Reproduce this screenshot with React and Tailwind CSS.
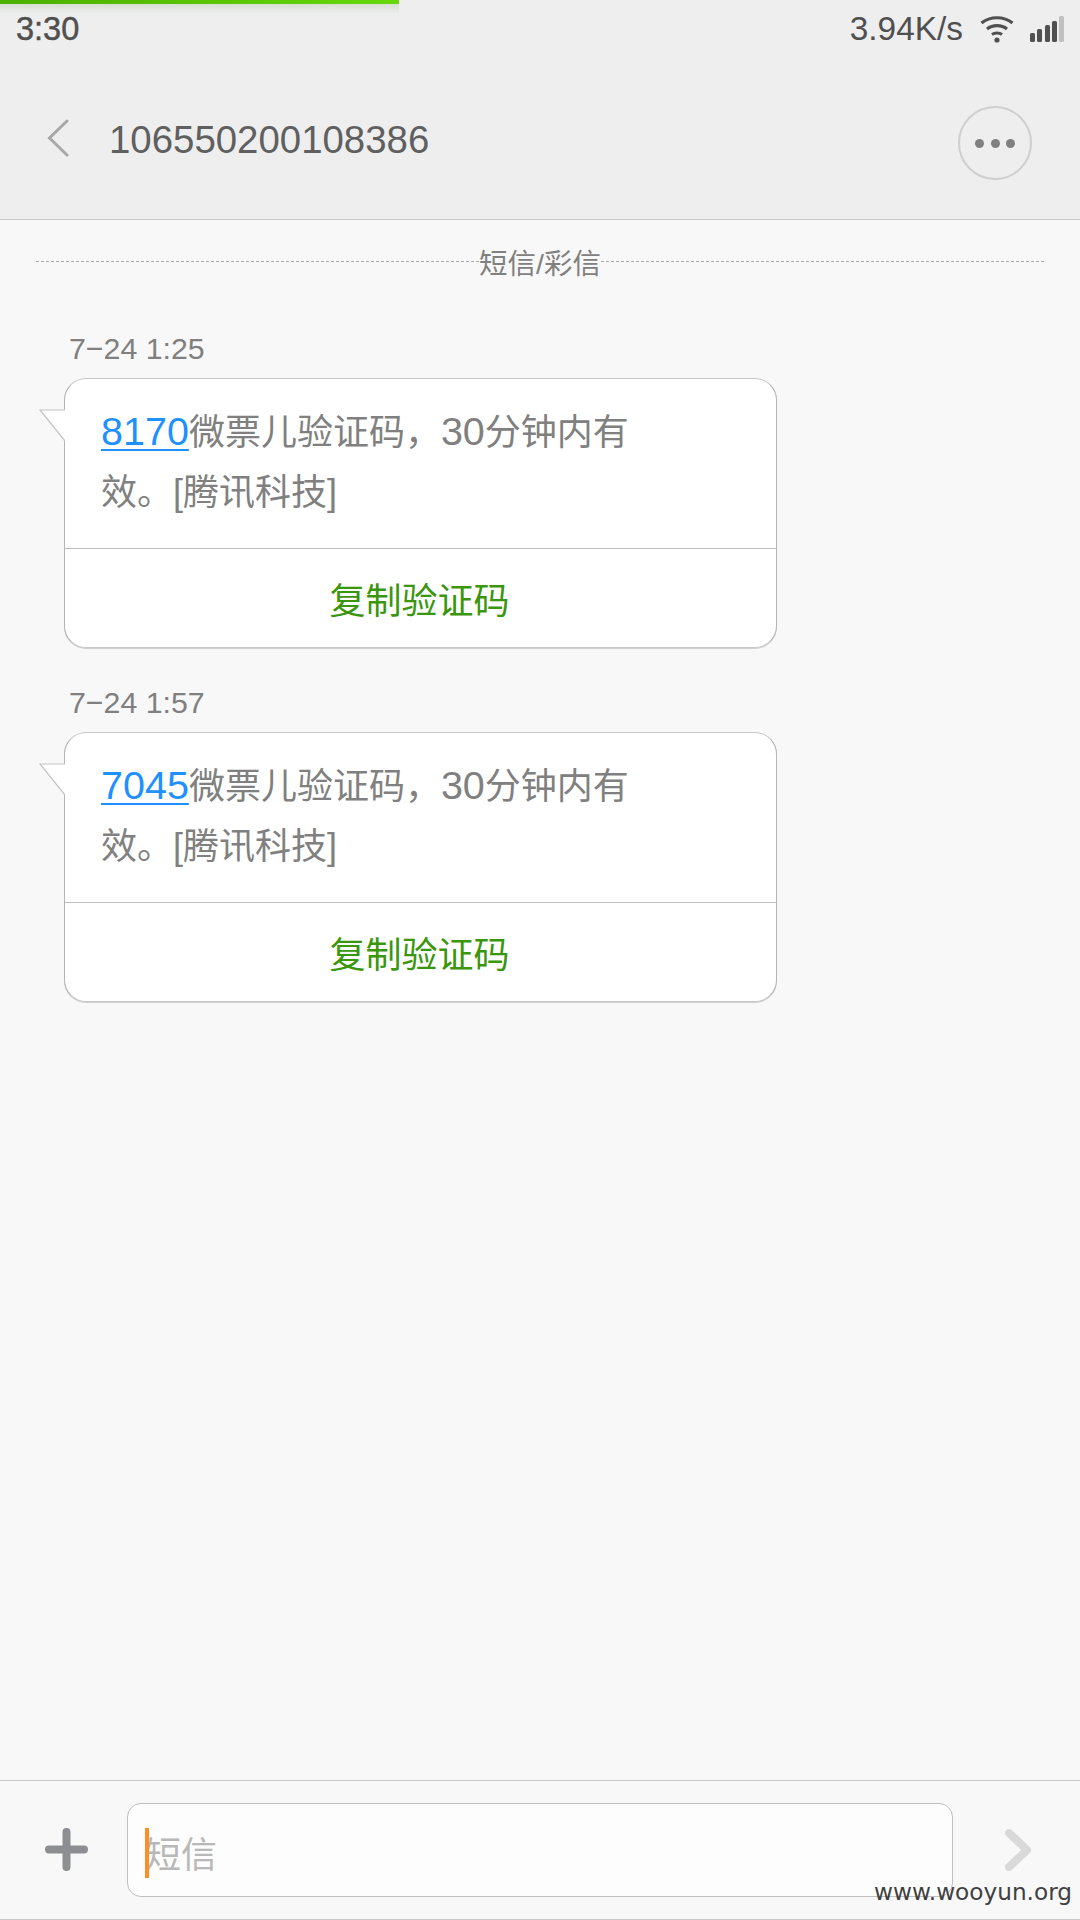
const latin = "font-['Liberation_Sans','Noto_Sans_CJK_SC',sans-serif]";

function Bubble({ time, code }) {
  return (
    <div className="flex flex-col">
      <div className="h-[48px] pl-[69px] pt-[2px] text-[30.3px] leading-[34px] text-[#808080]">{time}</div>
      <div className="relative ml-[64px] flex h-[270px] w-[713px] flex-col rounded-[22px] border border-[#b4b4b4] border-t-[#c8c8c8] border-b-[#c8c8c8] bg-white shadow-[0_1px_0_#d0d0d0]">
        <svg className="absolute left-[-26px] top-[30px]" width="28" height="34" viewBox="0 0 28 34">
          <path d="M26 1H1L26 32" fill="#ffffff" stroke="#c4c4c4" strokeWidth="1.2" />
          <rect x="26" y="1.6" width="2" height="30" fill="#ffffff" />
        </svg>
        <div className="h-[169px] w-[580px] pl-[36px] pt-[22px] text-[36px] leading-[60px] text-[#808080]">
          <span className="text-[39.5px] text-[#1e90ff] underline decoration-[2px] underline-offset-[4px]">{code}</span>
          微票儿验证码，<span className="text-[39.5px]">30</span>分钟内有效。[腾讯科技]
        </div>
        <div className="flex flex-1 items-center justify-center border-t border-[#bdbdbd] pr-[2px] pt-[7px] text-[36px] text-[#3a960c]">复制验证码</div>
      </div>
    </div>
  );
}

export default function App() {
  return (
    <div className={`relative flex h-[1920px] w-[1080px] flex-col overflow-hidden bg-[#f8f8f8] ${latin}`}>
      <div className="absolute left-0 top-0 h-[14px] w-[399px] bg-gradient-to-b from-[#cfd8c8] to-[#eeeeee]" />
      <div className="absolute left-0 top-0 h-[4px] w-[399px] bg-gradient-to-r from-[#4cb000] to-[#66d80c]" />

      <header className="flex h-[220px] flex-col border-b border-[#c8c8c8] bg-[#eeeeee]">
        <div className="flex h-[56px] items-center justify-between pl-[16px] pr-[16px] pt-[2px] text-[#505050]">
          <span className="text-[32.5px] font-medium [-webkit-text-stroke:0.5px_#505050]">3:30</span>
          <div className="flex items-center">
            <span className="text-[33.4px] leading-[34px]">3.94K/s</span>
            <svg className="ml-[16px]" width="36" height="28" viewBox="0 0 36 28" fill="none" stroke="#505050" strokeWidth="3.2">
              <path d="M2.5 8C11 1 25 1 33.5 8" />
              <path d="M8 14C13.5 9.5 22.5 9.5 28 14" />
              <path d="M13 19.5C15.8 17.5 20.2 17.5 23 19.5" />
              <circle cx="18" cy="25" r="2.6" fill="#505050" stroke="none" />
            </svg>
            <svg className="ml-[15px]" width="34" height="26" viewBox="0 0 34 26">
              <rect x="0" y="17" width="5" height="9" rx="1.5" fill="#505050" />
              <rect x="7" y="13" width="5" height="13" rx="1.5" fill="#505050" />
              <rect x="15" y="9" width="5" height="17" rx="1.5" fill="#505050" />
              <rect x="22" y="5" width="5" height="21" rx="1.5" fill="#505050" />
              <rect x="29" y="0" width="5" height="26" rx="1.5" fill="#c0c0c0" />
            </svg>
          </div>
        </div>
        <div className="flex flex-1 items-center pt-[4px] pl-[47px] pr-[48px]">
          <svg className="mt-[-3px]" width="22" height="38" viewBox="0 0 22 38" fill="none" stroke="#a8a8a8" strokeWidth="3" strokeLinecap="round">
            <path d="M20 2L2.5 19L20 36" />
          </svg>
          <span className="ml-[40px] text-[38.4px] text-[#5f5f5f]">106550200108386</span>
          <div className="ml-auto mt-[7px] flex h-[74px] w-[74px] items-center justify-center gap-[6.5px] rounded-full border-2 border-[#cfcfcf]">
            <span className="h-[9px] w-[9px] rounded-full bg-[#808080]" />
            <span className="h-[9px] w-[9px] rounded-full bg-[#808080]" />
            <span className="h-[9px] w-[9px] rounded-full bg-[#808080]" />
          </div>
        </div>
      </header>

      <main className="flex flex-1 flex-col">
        <div className="mx-[36px] mt-[22px] flex h-[40px] items-center">
          <div className="mt-[-2px] flex-1 border-t border-dashed border-[#aaaaaa]" />
          <span className="relative top-[2px] text-[28.5px] leading-[40px] text-[#808080]">短信/彩信</span>
          <div className="mt-[-2px] flex-1 border-t border-dashed border-[#aaaaaa]" />
        </div>
        <div className="mt-[48px] flex flex-col gap-[36px]">
          <Bubble time="7−24 1:25" code="8170" />
          <Bubble time="7−24 1:57" code="7045" />
        </div>
      </main>

      <footer className="flex h-[140px] items-start border-y border-[#c8c8c8] bg-[#f8f8f8] pl-[45px] pt-[22px]">
        <svg className="mt-[25px]" width="43" height="43" viewBox="0 0 43 43" stroke="#8d8e92" strokeWidth="8" strokeLinecap="round">
          <path d="M4 21.5H39M21.5 4V39" />
        </svg>
        <div className="relative ml-[39px] flex h-[94px] w-[826px] items-center rounded-[14px] border border-[#c0c0c0] bg-[#fdfdfd] pl-[17px] pt-[11px] text-[36px] text-[#b8b8b8]">
          短信
          <span className="absolute left-[17px] top-[24px] h-[50px] w-[4px] bg-[#ff8c24]" />
        </div>
        <svg className="ml-[52px] mt-[26px]" width="28" height="42" viewBox="0 0 28 42" fill="none" stroke="#d9d9d9" strokeWidth="8" strokeLinecap="round" strokeLinejoin="round">
          <path d="M4 4L22 21L4 38" />
        </svg>
      </footer>

      <span className="absolute left-[874px] top-[1875px] font-['DejaVu_Sans',sans-serif] text-[23.2px] leading-[34px] text-[#404040]">www.wooyun.org</span>
    </div>
  );
}
